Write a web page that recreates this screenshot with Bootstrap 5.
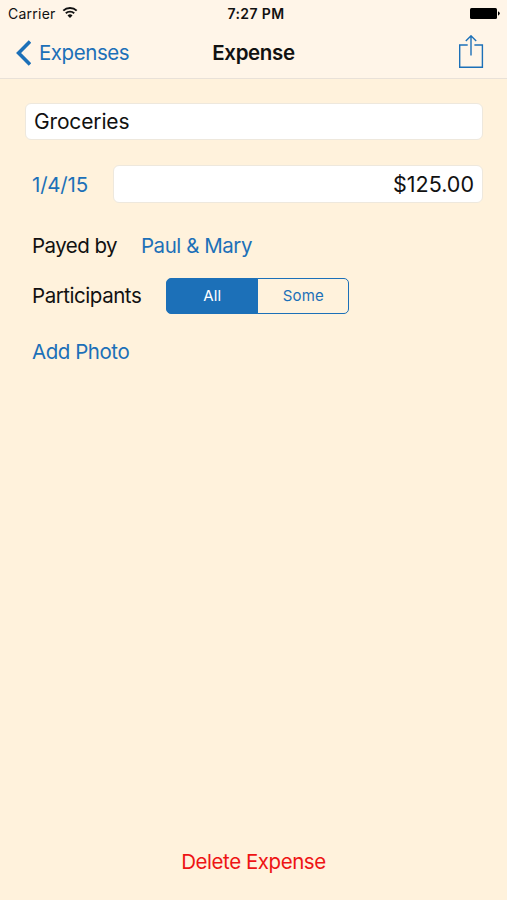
<!DOCTYPE html>
<html lang="en">
<head>
<meta charset="utf-8">
<meta name="viewport" content="width=device-width, initial-scale=1">
<title>Expense</title>
<link rel="stylesheet" href="https://cdn.jsdelivr.net/npm/bootstrap@5.3.0/dist/css/bootstrap.min.css">
<style>
:root { --tint: #1c70b8; --line: #e9e1d8; }
body { font-family: Inter, "Liberation Sans", sans-serif; font-size: 20.5px; line-height: 26px; letter-spacing: -.45px; color: #111; background: #fff2dc; }
.screen { height: 900px; }
.top-area { height: 79px; background: #fff5e8; border-bottom: 1px solid var(--line); }
.status { height: 27px; font-size: 14px; line-height: 27px; padding: 0 7px 0 8px; letter-spacing: .25px; }
.clock { margin-left: 4px; letter-spacing: .4px; }
.wifi { margin-left: 5px; margin-top: -2px; }
.title-bar { height: 51px; padding: 0 23px 0 16px; }
.equal { flex: 1 1 0; }
.tint, .tint:hover { color: var(--tint); }
.plain { border: 0; padding: 0; background: none; font-size: inherit; line-height: inherit; letter-spacing: inherit; text-decoration: none; }
.screen-title { padding-left: 7px; letter-spacing: -.35px; }
.fields { padding: 24px 24px 0 25px; }
.field, .field:focus { height: 37px; padding: 0 8px; border: 1px solid #eee8dd; border-radius: 6px; background: #fff; color: #111; font-size: 21px; letter-spacing: -.15px; line-height: 26px; box-shadow: none; }
.field.amount { height: 38px; font-size: 21.5px; letter-spacing: 0; }
.date-row { margin-top: 25px; }
.date { width: 88px; padding: 2px 0 0 7px; letter-spacing: -.2px; }
.label-row { padding-left: 7px; }
.payer-label { letter-spacing: -.55px; }
.payer-row { margin-top: 30px; height: 26px; }
.people-row { margin-top: 19px; height: 36px; }
.photo-row { margin-top: 25px; height: 26px; }
.segments { width: 183px; height: 36px; margin-left: 25px; }
.segments .btn { --bs-btn-color: var(--tint); --bs-btn-border-color: var(--tint); --bs-btn-active-bg: var(--tint); --bs-btn-active-border-color: var(--tint); --bs-btn-active-color: #fff; --bs-btn-border-radius: 5px; width: 50%; padding: 0; font-size: 15px; line-height: 34px; letter-spacing: .2px; }
.danger-link { color: #ee1414; }
.bottom-area { height: 51px; }
</style>
<script src="https://cdn.jsdelivr.net/npm/bootstrap@5.3.0/dist/js/bootstrap.bundle.min.js" defer></script>
</head>
<body>
<div class="screen d-flex flex-column overflow-hidden">
  <header class="top-area">
    <div class="status d-flex align-items-center">
      <div class="equal d-flex align-items-center">
        <span>Carrier</span>
        <svg class="wifi" width="18" height="14" viewBox="0 0 18 14" fill="none" stroke="#111" stroke-width="1.9"><path d="M2.3 4.7a9.5 9.5 0 0 1 13.4 0M4.8 7.3a6 6 0 0 1 8.4 0"/><path d="M9 12 6.5 9.5a3.6 3.6 0 0 1 5 0z" fill="#111" stroke="none"/></svg>
      </div>
      <span class="clock fw-semibold">7:27 PM</span>
      <div class="equal d-flex justify-content-end">
        <svg width="30" height="13" viewBox="0 0 30 13"><rect x="0" y="1" width="27" height="11" rx="1.5"/><path d="M28 4.3q3.6 2.2 0 4.4z"/></svg>
      </div>
    </div>
    <nav class="title-bar d-flex align-items-center">
      <div class="equal d-flex">
        <a href="#" class="tint plain d-flex align-items-center">
          <svg class="me-2" width="15" height="26" viewBox="0 0 15 26" fill="none" stroke="currentColor" stroke-width="3.6"><path d="M14 1.5 2.6 13 14 24.5"/></svg>
          <span>Expenses</span>
        </a>
      </div>
      <h1 class="plain screen-title fw-semibold m-0">Expense</h1>
      <div class="equal d-flex justify-content-end">
        <button class="plain tint d-flex" aria-label="Share">
          <svg width="26" height="36" viewBox="0 0 26 36" fill="none" stroke="currentColor" stroke-width="1.4"><path d="M9.7 10H1.7v22.3h22.7V10h-8M13 20.5V.8M7.8 6 13 .8 18.2 6"/></svg>
        </button>
      </div>
    </nav>
  </header>
  <main class="fields flex-grow-1">
    <input class="form-control field" value="Groceries" aria-label="Description">
    <div class="date-row d-flex align-items-center">
      <div class="date flex-shrink-0"><a href="#" class="plain tint">1/4/15</a></div>
      <input class="form-control field amount text-end" value="$125.00" aria-label="Amount">
    </div>
    <div class="label-row payer-row d-flex align-items-center">
      <span class="payer-label">Payed by</span>
      <a href="#" class="plain tint ms-4">Paul &amp; Mary</a>
    </div>
    <div class="label-row people-row d-flex align-items-center">
      <span>Participants</span>
      <div class="btn-group segments">
        <button class="btn active">All</button>
        <button class="btn">Some</button>
      </div>
    </div>
    <div class="label-row photo-row"><a href="#" class="plain tint d-block">Add Photo</a></div>
  </main>
  <footer class="bottom-area text-center"><button class="plain danger-link">Delete Expense</button></footer>
</div>
</body>
</html>
